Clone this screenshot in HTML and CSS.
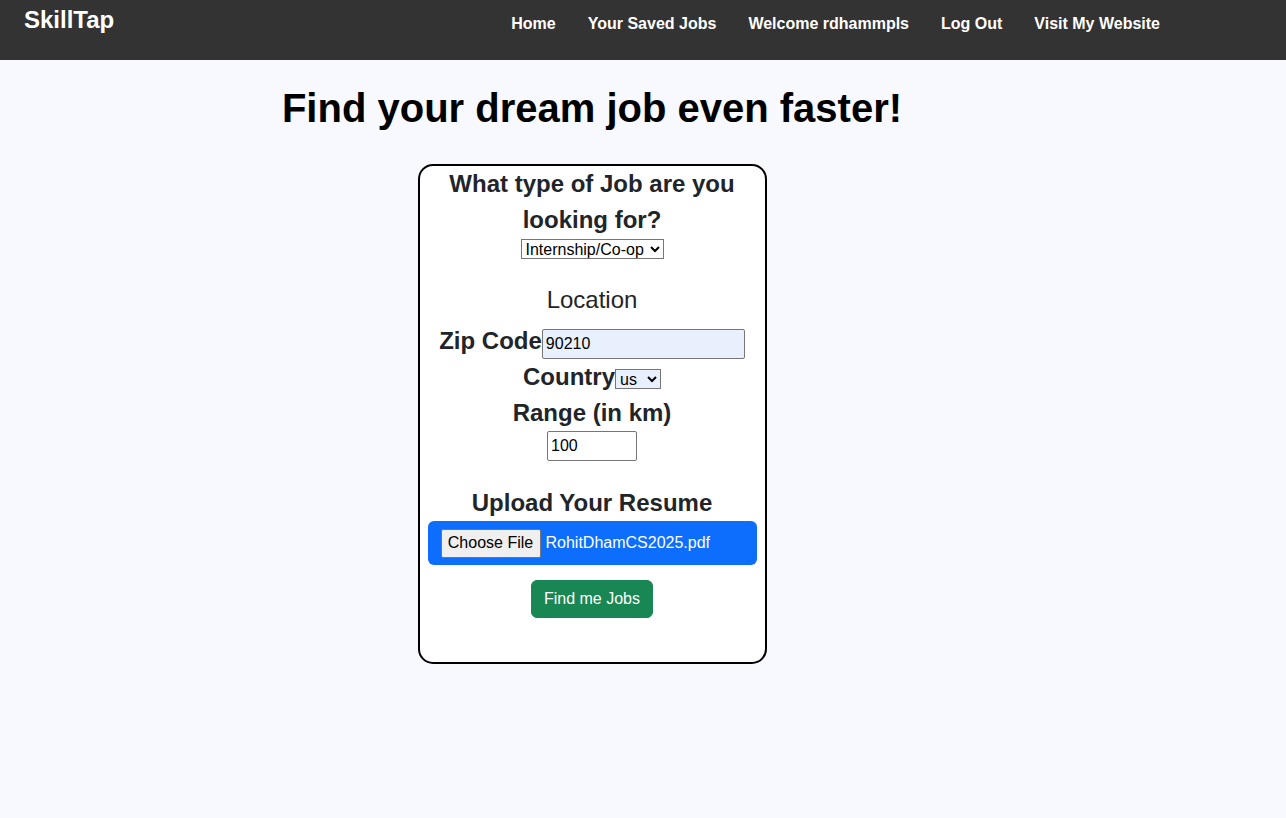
FILE: index.html
```html
<!DOCTYPE html>
<html lang="en">
<head>
<meta charset="utf-8">
<title>SkillTap</title>
<link rel="stylesheet" href="styles.css">
</head>
<body>
<header class="navbar">
  <a class="brand" href="#">SkillTap</a>
  <nav class="nav-links">
    <a href="#">Home</a>
    <a href="#">Your Saved Jobs</a>
    <a href="#">Welcome rdhammpls</a>
    <a href="#">Log Out</a>
    <a href="#">Visit My Website</a>
  </nav>
</header>
<main class="main">
  <h1 class="title">Find your dream job even faster!</h1>
  <form class="card">
    <label class="question" for="jobtype">What type of Job are you looking for?</label>
    <select id="jobtype" class="select job-select">
      <option>Internship/Co-op</option>
      <option>Full-time</option>
      <option>Part-time</option>
    </select>
    <div class="section-label">Location</div>
    <div class="row zip-row"><label for="zip">Zip Code</label><input id="zip" class="input zip-input" type="text" value="90210"></div>
    <div class="row"><label for="country">Country</label><select id="country" class="select country-select autofill"><option>us</option><option>ca</option></select></div>
    <div class="row"><label for="range">Range (in km)</label></div>
    <input id="range" class="input range-input" type="text" value="100">
    <div class="row upload-label">Upload Your Resume</div>
    <div class="file-bar">
      <span class="file-btn">Choose File</span>
      <span class="file-name">RohitDhamCS2025.pdf</span>
    </div>
    <button type="button" class="submit-btn">Find me Jobs</button>
  </form>
</main>
</body>
</html>
```
FILE: styles.css
```css
* { box-sizing: border-box; }
html, body { margin: 0; padding: 0; }
body {
  background: #f8f9ff;
  font-family: "Liberation Sans", Arial, sans-serif;
  color: #212529;
  min-height: 818px;
}
.navbar {
  display: flex;
  align-items: flex-start;
  height: 60px;
  background: #333333;
  padding: 0 126px 0 24px;
}
.brand {
  color: #fff;
  font-weight: bold;
  font-size: 24px;
  line-height: 28.8px;
  margin-top: 6px;
  text-decoration: none;
}
.nav-links {
  margin-left: auto;
  display: flex;
  gap: 32px;
  margin-top: 12px;
}
.nav-links a {
  color: #fff;
  font-weight: bold;
  font-size: 16px;
  line-height: 24px;
  text-decoration: none;
}
.main {
  width: 1184px;
  display: flex;
  flex-direction: column;
  align-items: center;
}
.title {
  margin: 24px 0 0;
  font-size: 40px;
  line-height: 48px;
  font-weight: bold;
  color: #000;
}
.card {
  margin-top: 32px;
  width: 349px;
  height: 500px;
  border: 2px solid #000;
  border-radius: 15px;
  background: #fff;
  padding: 0 7px;
  display: flex;
  flex-direction: column;
  align-items: center;
  text-align: center;
}
.question {
  font-size: 24px;
  font-weight: bold;
  line-height: 36px;
  padding: 0 20px;
}
.select {
  font-family: "Liberation Sans", Arial, sans-serif;
  font-size: 16px;
  color: #000;
  border: 1px solid #767676;
  border-radius: 0;
  background-color: #fff;
  height: 20px;
  padding: 0;
}
.job-select { width: 143px; margin-top: 1px; }
.country-select { width: 46px; }
.autofill { background-color: #e8f0fe; }
.section-label {
  margin-top: 23px;
  font-size: 24px;
  line-height: 36px;
}
.row {
  font-size: 24px;
  font-weight: bold;
  line-height: 36px;
  white-space: nowrap;
}
.zip-row { margin-top: 5px; }
.input {
  font-family: "Liberation Sans", Arial, sans-serif;
  font-size: 16px;
  color: #000;
  border: 1px solid #767676;
  border-radius: 2px;
  height: 30px;
  padding: 1px 3px;
  background: #fff;
}
.zip-input { width: 203px; background: #e8f0fe; }
.range-input { width: 90px; }
.upload-label { margin-top: 24px; }
.file-bar {
  width: 329px;
  height: 44px;
  background: #0d6efd;
  border-radius: 6px;
  display: flex;
  align-items: center;
  padding: 0 13px;
  gap: 5px;
  font-size: 16px;
}
.file-btn {
  width: 100px;
  height: 29px;
  background: #efefef;
  border: 1px solid #767676;
  border-radius: 2px;
  color: #000;
  display: flex;
  align-items: center;
  justify-content: center;
}
.file-name { color: #fff; }
.submit-btn {
  margin-top: 15px;
  background: #198754;
  color: #fff;
  border: 1px solid #198754;
  border-radius: 6px;
  font-family: "Liberation Sans", Arial, sans-serif;
  font-size: 16px;
  line-height: 24px;
  padding: 0;
  white-space: nowrap;
  width: 122px;
  height: 38px;
}
```
